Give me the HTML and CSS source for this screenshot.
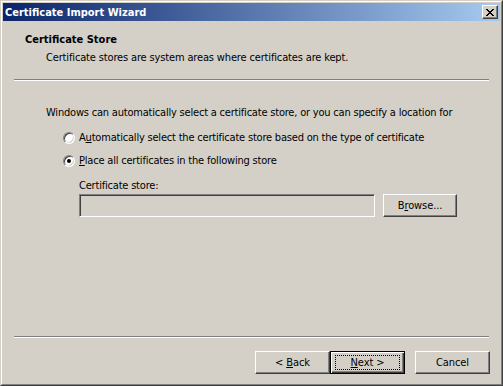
FILE: index.html
```html
<!DOCTYPE html>
<html lang="en">
<head>
    <meta charset="UTF-8">
    <title>Certificate Import Wizard</title>
    <link rel="stylesheet" href="styles.css">
</head>
<body>
    <div class="window">
        <div class="window-inner">
            <div class="titlebar">
                <span class="title-text">Certificate Import Wizard</span>
                <span class="close-btn">
                    <svg width="8" height="7" viewBox="0 0 8 7">
                        <path d="M0 0h2v1h1v1h2v-1h1v-1h2v1h-1v1h-1v1h-1v1h1v1h1v1h1v1h-2v-1h-1v-1h-2v1h-1v1h-2v-1h1v-1h1v-1h1v-1h-1v-1h-1v-1h-1z" fill="#000"/>
                    </svg>
                </span>
            </div>

            <div class="header">
                <div class="header-title">Certificate Store</div>
                <div class="header-sub">Certificate stores are system areas where certificates are kept.</div>
            </div>

            <div class="separator"></div>

            <div class="content">
                <p class="intro">Windows can automatically select a certificate store, or you can specify a location for</p>

                <div class="radio-row first">
                    <span class="radio"></span>
                    <span>A<u>u</u>tomatically select the certificate store based on the type of certificate</span>
                </div>
                <div class="radio-row second">
                    <span class="radio"><span class="dot"></span></span>
                    <span><u>P</u>lace all certificates in the following store</span>
                </div>

                <div class="store-label">Certificate store:</div>
                <div class="store-row">
                    <div class="store-input"></div>
                    <button class="btn browse">B<u>r</u>owse...</button>
                </div>
            </div>

            <div class="spacer"></div>

            <div class="separator bottom"></div>

            <div class="button-row">
                <button class="btn">&lt; <u>B</u>ack</button>
                <button class="btn btn-default"><u>N</u>ext &gt;</button>
                <button class="btn cancel">Cancel</button>
            </div>
        </div>
    </div>
</body>
</html>
```

FILE: styles.css
```css
body { margin: 0; font-family: "DejaVu Sans Condensed", "DejaVu Sans", sans-serif; font-size: 11px; color: #000; }
.window { width: 503px; height: 386px; box-sizing: border-box; background: #d4d0c8; border: 1px solid; border-color: #d4d0c8 #404040 #404040 #d4d0c8; display: flex; }
.window-inner { flex: 1; border: 1px solid; border-color: #fff #808080 #808080 #fff; padding: 1px; display: flex; flex-direction: column; }

.titlebar { height: 18px; display: flex; align-items: center; justify-content: space-between; padding: 0 2px; background: linear-gradient(to right, #0a246a, #a6caf0); }
.title-text { color: #fff; font-weight: bold; font-size: 11px; }
.close-btn { width: 16px; height: 14px; box-sizing: border-box; background: #d4d0c8; border: 1px solid; border-color: #fff #404040 #404040 #fff; box-shadow: inset -1px -1px #808080; display: flex; align-items: center; justify-content: center; }
.close-btn svg { display: block; }

.header { padding: 12px 0 0 22px; line-height: 13px; }
.header-title { font-weight: bold; }
.header-sub { margin: 5px 0 0 21px; letter-spacing: -0.15px; }

.separator { height: 0; margin: 15px 11px 0 11px; border-top: 1px solid #808080; border-bottom: 1px solid #fff; }

.content { padding-left: 43px; line-height: 13px; letter-spacing: -0.2px; }
.intro { margin: 25px 0 0 0; }
.radio-row { display: flex; align-items: center; gap: 4px; margin-left: 17px; height: 13px; }
.radio-row.first { margin-top: 12px; }
.radio-row.second { margin-top: 10px; }
.radio { width: 12px; height: 12px; box-sizing: border-box; border-radius: 50%; border: 1px solid; border-color: #808080 #fff #fff #808080; box-shadow: inset 1px 1px #404040, inset -1px -1px #d4d0c8; background: #fff; display: flex; align-items: center; justify-content: center; }
.dot { width: 4px; height: 4px; border-radius: 50%; background: #000; }

.store-label { margin: 12px 0 0 33px; }
.store-row { display: flex; gap: 8px; margin: 2px 0 0 33px; }
.store-input { width: 296px; height: 23px; box-sizing: border-box; border: 1px solid; border-color: #808080 #fff #fff #808080; box-shadow: inset 1px 1px #404040, inset -1px -1px #d4d0c8; background: #d4d0c8; }

.btn { width: 75px; height: 23px; box-sizing: border-box; padding: 0; margin: 0; font-family: inherit; font-size: 11px; letter-spacing: -0.1px; color: #000; background: #d4d0c8; border: 1px solid; border-color: #fff #404040 #404040 #fff; box-shadow: inset -1px -1px #808080; }
.browse { width: 74px; }
.btn-default { position: relative; border-color: #000; box-shadow: inset 1px 1px #fff, inset -1px -1px #404040, inset -2px -2px #808080; }
.btn-default::after { content: ""; position: absolute; top: 3px; left: 4px; right: 4px; bottom: 3px; border: 1px dotted #000; }

.spacer { flex: 1; }
.separator.bottom { margin-top: 0; }
.button-row { display: flex; justify-content: flex-end; margin: 13px 10px 9px 0; }
.cancel { margin-left: 10px; }
```
